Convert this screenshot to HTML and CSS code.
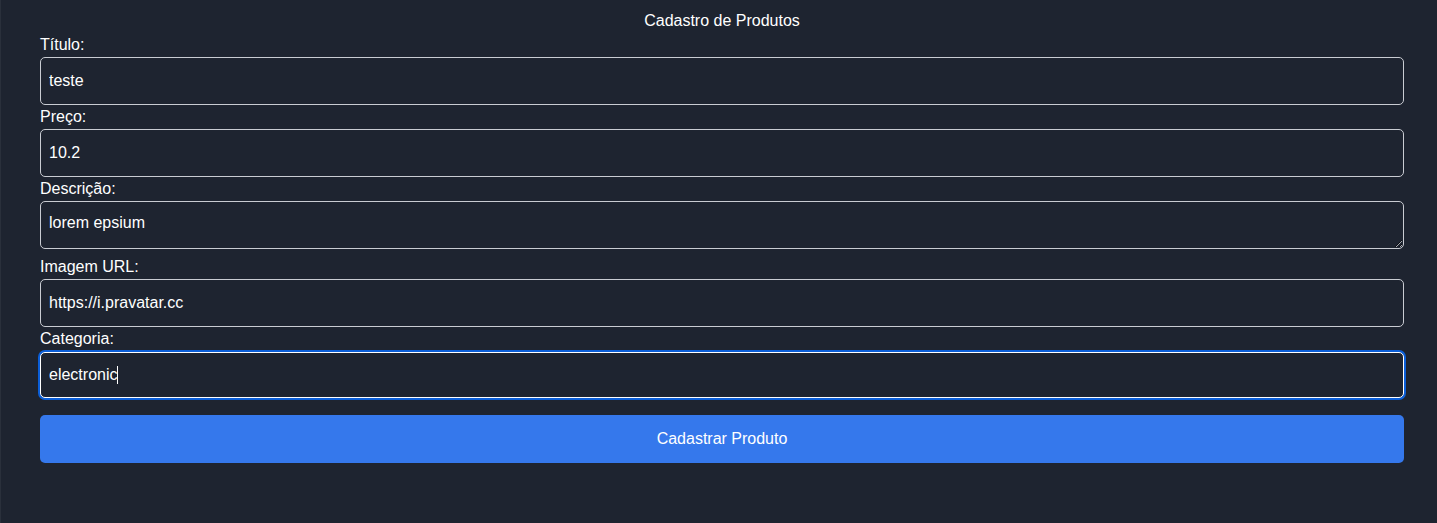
FILE: index.html
```html
<!DOCTYPE html>
<html lang="pt">
<head>
<meta charset="utf-8">
<title>Cadastro de Produtos</title>
<link rel="stylesheet" href="styles.css">
</head>
<body>
<div class="page">
  <h1 class="title">Cadastro de Produtos</h1>
  <form class="form">
    <label class="label">Título:</label>
    <input class="field" type="text" value="teste">
    <label class="label">Preço:</label>
    <input class="field" type="text" value="10.2">
    <label class="label">Descrição:</label>
    <textarea class="field area">lorem epsium</textarea>
    <label class="label">Imagem URL:</label>
    <input class="field" type="text" value="https://i.pravatar.cc">
    <label class="label">Categoria:</label>
    <div class="field focus"><span>electronic</span><span class="caret"></span></div>
    <button class="btn" type="button">Cadastrar Produto</button>
  </form>
</div>
</body>
</html>
```
FILE: styles.css
```css
html, body {
  margin: 0;
  padding: 0;
  background: #1e2430;
  height: 100%;
}
body {
  font-family: "Liberation Sans", Arial, sans-serif;
  color: #ffffff;
  font-size: 16px;
}
.page {
  box-sizing: border-box;
  min-height: 100%;
  border-left: 1px solid #2a303b;
  padding: 9px 33px 0 39px;
}
.title {
  margin: 0;
  font-size: 16px;
  font-weight: normal;
  line-height: 24px;
  text-align: center;
}
.form {
  display: flex;
  flex-direction: column;
}
.label {
  display: block;
  line-height: 24px;
  height: 24px;
}
.field {
  box-sizing: border-box;
  width: 100%;
  height: 48px;
  margin: 0;
  padding: 0 8px;
  background: #1e2430;
  color: #ffffff;
  border: 1px solid #c9ccd2;
  border-radius: 5px;
  font-family: "Liberation Sans", Arial, sans-serif;
  font-size: 16px;
  outline: none;
}
.area {
  padding: 12px 8px;
  resize: vertical;
  margin-bottom: 6px;
  line-height: 18px;
}
.focus {
  display: flex;
  align-items: center;
  border: 1px solid #ffffff;
  box-shadow: 0 0 0 2px #0b5ed7;
  height: 46px;
  margin: 1px 0;
  width: auto;
}
.caret {
  display: inline-block;
  width: 1px;
  height: 18px;
  background: #ffffff;
}
.btn {
  margin-top: 16px;
  height: 48px;
  border: none;
  border-radius: 5px;
  background: #3578ec;
  color: #ffffff;
  font-family: "Liberation Sans", Arial, sans-serif;
  font-size: 16px;
}
```
